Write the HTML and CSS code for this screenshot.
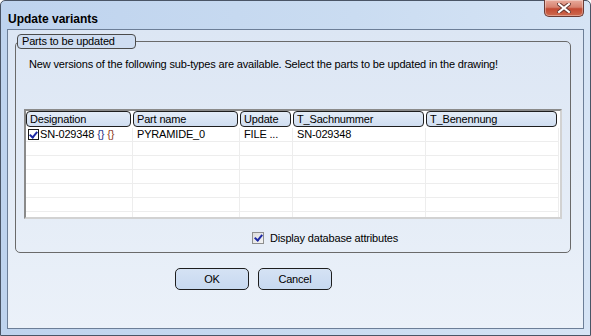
FILE: index.html
```html
<!DOCTYPE html>
<html lang="en">

<head>
    <meta charset="UTF-8">
    <title>Update variants</title>
    <link rel="stylesheet" href="styles.css">
</head>

<body>
    <div class="window">
        <div class="titlebar">
            <span class="title">Update variants</span>
            <button class="close" type="button">
                <svg width="14" height="10" viewBox="0 0 14 10">
                    <path d="M2 1 L12 9 M12 1 L2 9" stroke="#6b3a33" stroke-width="4" stroke-linecap="square" fill="none" />
                    <path d="M2 1 L12 9 M12 1 L2 9" stroke="#ffffff" stroke-width="2" stroke-linecap="square" fill="none" />
                </svg>
            </button>
        </div>
        <div class="client">
            <fieldset class="group">
                <legend>Parts to be updated</legend>
                <p class="intro">New versions of the following sub-types are available. Select the parts to be updated in the drawing!</p>
                <div class="list">
                    <div class="list-head">
                        <div class="col"><span class="hdr">Designation</span></div>
                        <div class="col"><span class="hdr">Part name</span></div>
                        <div class="col"><span class="hdr">Update</span></div>
                        <div class="col"><span class="hdr">T_Sachnummer</span></div>
                        <div class="col"><span class="hdr">T_Benennung</span></div>
                    </div>
                    <div class="list-row">
                        <div class="cell first"><span class="check on"></span>SN-029348 <span class="brace">{}</span> <span class="brace alt">{}</span></div>
                        <div class="cell">PYRAMIDE_0</div>
                        <div class="cell">FILE ...</div>
                        <div class="cell">SN-029348</div>
                        <div class="cell"></div>
                    </div>
                    <div class="list-row"><div class="cell"></div><div class="cell"></div><div class="cell"></div><div class="cell"></div><div class="cell"></div></div>
                    <div class="list-row"><div class="cell"></div><div class="cell"></div><div class="cell"></div><div class="cell"></div><div class="cell"></div></div>
                    <div class="list-row"><div class="cell"></div><div class="cell"></div><div class="cell"></div><div class="cell"></div><div class="cell"></div></div>
                    <div class="list-row"><div class="cell"></div><div class="cell"></div><div class="cell"></div><div class="cell"></div><div class="cell"></div></div>
                    <div class="list-row"><div class="cell"></div><div class="cell"></div><div class="cell"></div><div class="cell"></div><div class="cell"></div></div>
                    <div class="list-row"><div class="cell"></div><div class="cell"></div><div class="cell"></div><div class="cell"></div><div class="cell"></div></div>
                </div>
                <label class="db-opt"><span class="check grey on"></span>Display database attributes</label>
            </fieldset>
            <div class="buttons">
                <button type="button" class="btn">OK</button>
                <button type="button" class="btn">Cancel</button>
            </div>
        </div>
    </div>
</body>

</html>
```

FILE: styles.css
```css
body {
    margin: 0;
    font-family: "Liberation Sans", Arial, sans-serif;
    font-size: 11px;
    letter-spacing: -0.17px;
    color: #000;
}

.window {
    width: 591px;
    height: 336px;
    box-sizing: border-box;
    border: 1px solid #4a5566;
    border-radius: 5px 5px 0 0;
    padding: 0 6px 6px 6px;
    background: linear-gradient(90deg, #bed3ee, #cadcf1 60%, #d6e4f5);
    display: flex;
    flex-direction: column;
}

.titlebar {
    height: 28px;
    display: flex;
    justify-content: space-between;
    align-items: flex-start;
}

.title {
    font-size: 12px;
    font-weight: bold;
    letter-spacing: 0;
    padding: 12px 0 0 1px;
    line-height: 12px;
}

.close {
    width: 40px;
    height: 17px;
    margin: -1px 0 0 0;
    padding: 0;
    border: 1px solid #6b3b35;
    border-top: none;
    border-radius: 0 0 5px 5px;
    background: linear-gradient(180deg, #e9ab9c, #d7826f 45%, #c34a33 55%, #cd6a4f);
    box-shadow: inset 0 0 0 1px rgba(255, 255, 255, 0.35);
    display: flex;
    align-items: center;
    justify-content: center;
}

.client {
    flex: 1;
    border: 1px solid #6c7e97;
    background: linear-gradient(180deg, #dce6f4, #ebf1f9);
    display: flex;
    flex-direction: column;
}

.group {
    margin: 4px 12px 0 7px;
    padding: 0 0 8px 0;
    border: 1px solid #6a6a6a;
    border-radius: 5px;
    min-width: 0;
}

.group legend {
    margin-left: 1px;
    padding: 0 4px;
    width: 119px;
    box-sizing: border-box;
    height: 15px;
    line-height: 13px;
    border: 1px solid #4b4b4b;
    border-radius: 4px;
    background: #cfddf1;
}

.intro {
    margin: 8px 0 0 13px;
    line-height: 14px;
}

.list {
    margin: 38px 8px 0 8px;
    height: 110px;
    box-sizing: border-box;
    border: 2px solid;
    border-color: #8a8a8a #d2d2d2 #d2d2d2 #8a8a8a;
    background: #fff;
    overflow: hidden;
}

.list-head,
.list-row {
    display: grid;
    grid-template-columns: 107px 107px 53px 133px 133px;
}

.list-head {
    height: 16px;
    margin-bottom: 1px;
}

.hdr {
    display: block;
    height: 16px;
    box-sizing: border-box;
    margin-right: 2px;
    padding: 0 3px;
    line-height: 14px;
    border: 1px solid #1e1e1e;
    border-radius: 4px;
    background: linear-gradient(180deg, #e3ecf8, #d0def1);
    white-space: nowrap;
    overflow: hidden;
}

.list-row {
    height: 14px;
}

.cell {
    box-sizing: border-box;
    height: 14px;
    border-right: 1px solid #ededed;
    border-bottom: 1px solid #ededed;
    padding: 0 4px;
    line-height: 13px;
    white-space: nowrap;
    overflow: hidden;
}

.cell.first {
    padding-left: 2px;
    display: flex;
    align-items: center;
}

.brace {
    color: #1c2f86;
    margin-left: 3px;
}

.brace.alt {
    color: #8b3a1c;
}

.check {
    display: inline-block;
    width: 11px;
    height: 11px;
    box-sizing: border-box;
    border: 1px solid #1a1a1a;
    background: #fff;
    margin-right: 1px;
    position: relative;
}

.check.on::after {
    content: "";
    position: absolute;
    left: 2px;
    top: 0;
    width: 3px;
    height: 6px;
    border: solid #1e2aa6;
    border-width: 0 2px 2px 0;
    transform: rotate(40deg);
}

.check.grey {
    width: 12px;
    height: 12px;
    border-color: #8e8f8f;
    background: linear-gradient(135deg, #dcdcdc, #f4f4f4);
    margin-right: 6px;
}

.check.grey::after {
    left: 3px;
}

.db-opt {
    display: flex;
    align-items: center;
    margin: 13px 0 0 236px;
    line-height: 12px;
}

.buttons {
    display: flex;
    gap: 9px;
    margin: 15px 0 0 167px;
}

.btn {
    width: 74px;
    height: 22px;
    padding: 0;
    font-family: inherit;
    font-size: 11px;
    letter-spacing: inherit;
    color: #000;
    border: 1px solid #1e1e1e;
    border-radius: 5px;
    background: linear-gradient(180deg, #d5e2f4, #c7d9f0);
}
```
